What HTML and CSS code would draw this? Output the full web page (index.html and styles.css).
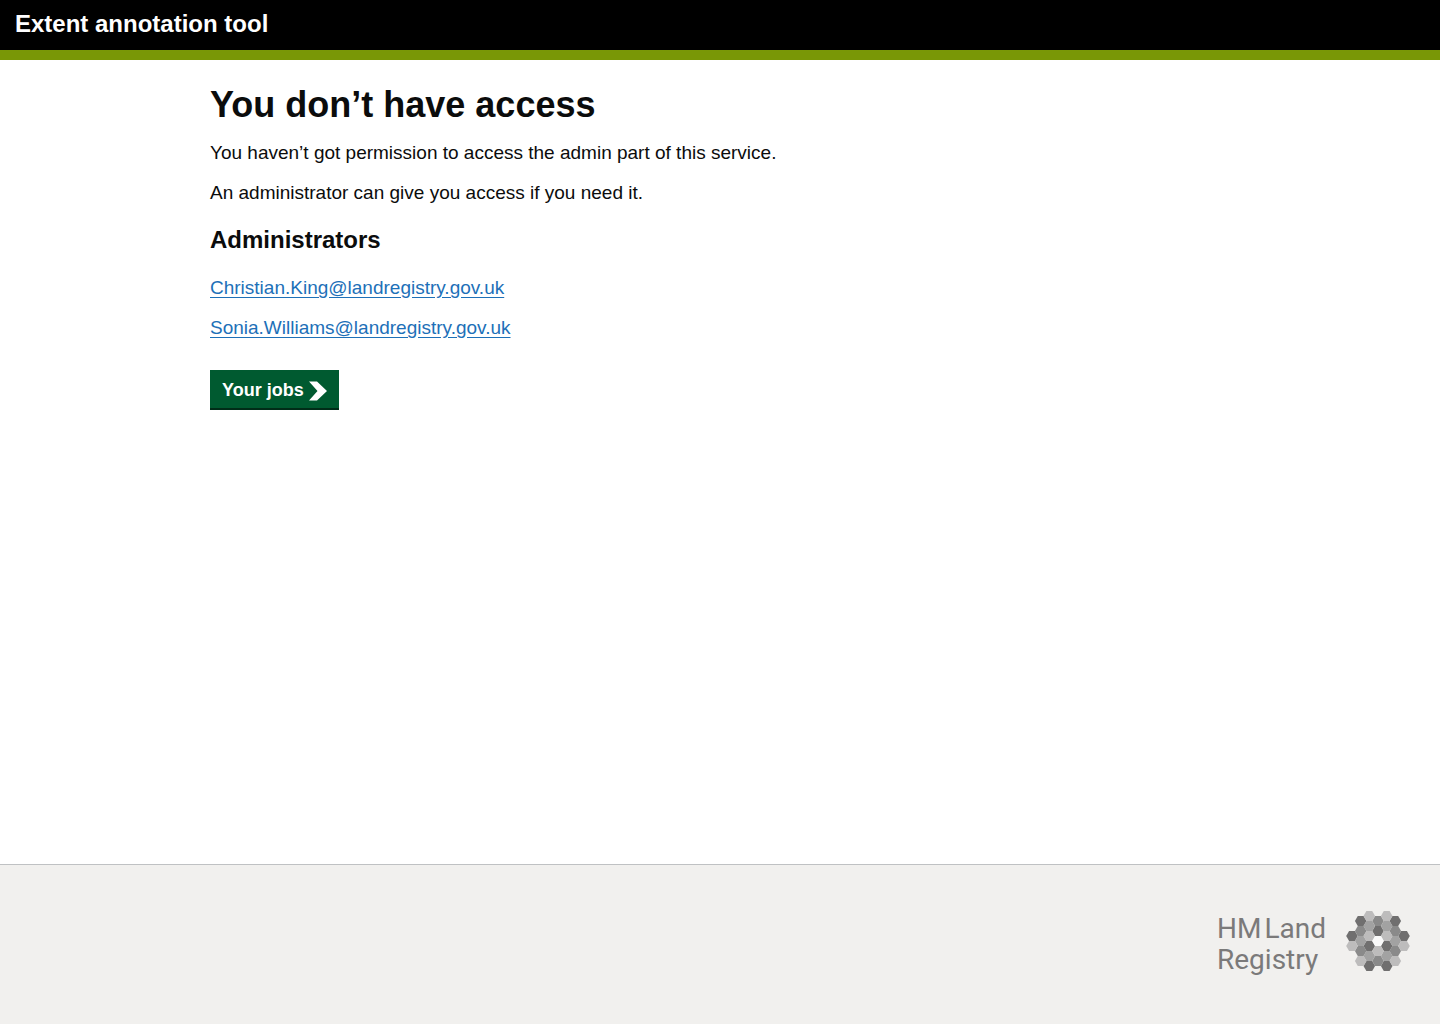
FILE: index.html
```html
<!DOCTYPE html>
<html lang="en">
<head>
<meta charset="utf-8">
<meta name="viewport" content="width=device-width, initial-scale=1">
<title>You don’t have access - Extent annotation tool</title>
<link rel="stylesheet" href="styles.css">
</head>
<body>
<header class="header">Extent annotation tool</header>
<main class="main">
  <h1 class="title">You don’t have access</h1>
  <p class="text">You haven’t got permission to access the admin part of this service.</p>
  <p class="text">An administrator can give you access if you need it.</p>
  <h2 class="subtitle">Administrators</h2>
  <ul class="contacts">
    <li><a class="link" href="mailto:Christian.King@landregistry.gov.uk">Christian.King@landregistry.gov.uk</a></li>
    <li><a class="link" href="mailto:Sonia.Williams@landregistry.gov.uk">Sonia.Williams@landregistry.gov.uk</a></li>
  </ul>
  <button class="button" type="button">Your jobs
    <svg class="chevron" viewBox="0 0 18 20" aria-hidden="true"><path d="M0 0.5h8L18 10 8 19.5H0L8.500 10z"/></svg>
  </button>
</main>
<footer class="footer">
  <div class="brand">
    <div class="wordmark">
      <div class="wordmark-line"><span>HM</span><span>Land</span></div>
      <div class="wordmark-line">Registry</div>
    </div>
    <svg class="emblem" viewBox="0 0 64 60" aria-hidden="true">
      <defs><path id="hex" d="M-5.800 0L-2.900-5h5.800L5.800 0 2.900 5h-5.800z"/></defs>
      <g fill="#706f6f">
        <use href="#hex" x="6" y="25"/><use href="#hex" x="14.700" y="10"/><use href="#hex" x="23.300" y="35"/><use href="#hex" x="23.300" y="55"/><use href="#hex" x="32" y="20"/><use href="#hex" x="40.700" y="35"/><use href="#hex" x="40.700" y="55"/><use href="#hex" x="49.300" y="10"/><use href="#hex" x="58" y="25"/>
      </g>
      <g fill="#8a8a8a">
        <use href="#hex" x="14.700" y="20"/><use href="#hex" x="14.700" y="40"/><use href="#hex" x="32" y="10"/><use href="#hex" x="32" y="50"/><use href="#hex" x="49.300" y="20"/><use href="#hex" x="49.300" y="40"/>
      </g>
      <g fill="#a2a2a2">
        <use href="#hex" x="14.700" y="30"/><use href="#hex" x="23.300" y="15"/><use href="#hex" x="23.300" y="45"/><use href="#hex" x="40.700" y="15"/><use href="#hex" x="40.700" y="45"/><use href="#hex" x="49.300" y="30"/>
      </g>
      <g fill="#bdbcbc">
        <use href="#hex" x="6" y="35"/><use href="#hex" x="14.700" y="50"/><use href="#hex" x="23.300" y="5"/><use href="#hex" x="23.300" y="25"/><use href="#hex" x="32" y="40"/><use href="#hex" x="40.700" y="5"/><use href="#hex" x="40.700" y="25"/><use href="#hex" x="49.300" y="50"/><use href="#hex" x="58" y="35"/>
      </g>
      <use href="#hex" x="32" y="30" fill="#fafafa"/>
    </svg>
  </div>
</footer>
</body>
</html>
```
FILE: styles.css
```css
* { box-sizing: border-box; }
body {
  margin: 0;
  min-height: 100vh;
  display: flex;
  flex-direction: column;
  background: #fff;
  color: #0b0c0c;
  font: 19px/25px "Liberation Sans", Arial, sans-serif;
}
.header {
  padding: 9px 15px 11px;
  border-bottom: 10px solid #799706;
  background: #000;
  color: #fff;
  font-size: 24px;
  font-weight: 700;
  line-height: 30px;
}
.main {
  flex: 1;
  width: 100%;
  max-width: 1050px;
  margin: 0 auto;
  padding: 25px 15px 60px;
}
.title { margin: 0 0 15px; font-size: 36px; line-height: 40px; }
.text { margin: 0 0 15px; }
.subtitle { margin: 20px 0; font-size: 24px; line-height: 30px; }
.contacts {
  display: flex;
  flex-direction: column;
  gap: 15px;
  margin: 0 0 30px;
  padding: 0;
  list-style: none;
}
.link { color: #1d70b8; text-underline-offset: 3px; }
.button {
  display: inline-flex;
  align-items: center;
  gap: 5px;
  height: 40px;
  padding: 1px 12px 0;
  border: 0;
  background: #005a30;
  box-shadow: inset 0 -2px #002d18;
  color: #fff;
  font: 700 18px/25px "Liberation Sans", Arial, sans-serif;
}
.chevron { width: 18px; height: 20px; fill: #fff; }
.footer {
  padding: 46px 30px 49px;
  border-top: 1px solid #bfc1c3;
  background: #f1f0ee;
}
.brand { display: flex; justify-content: flex-end; gap: 20px; }
.wordmark {
  padding-top: 2px;
  color: #7b7a7a;
  font: 400 28px/31px Roboto, "Open Sans", sans-serif;
}
.wordmark-line { display: flex; gap: 3px; }
.emblem { width: 64px; height: 60px; }
```
